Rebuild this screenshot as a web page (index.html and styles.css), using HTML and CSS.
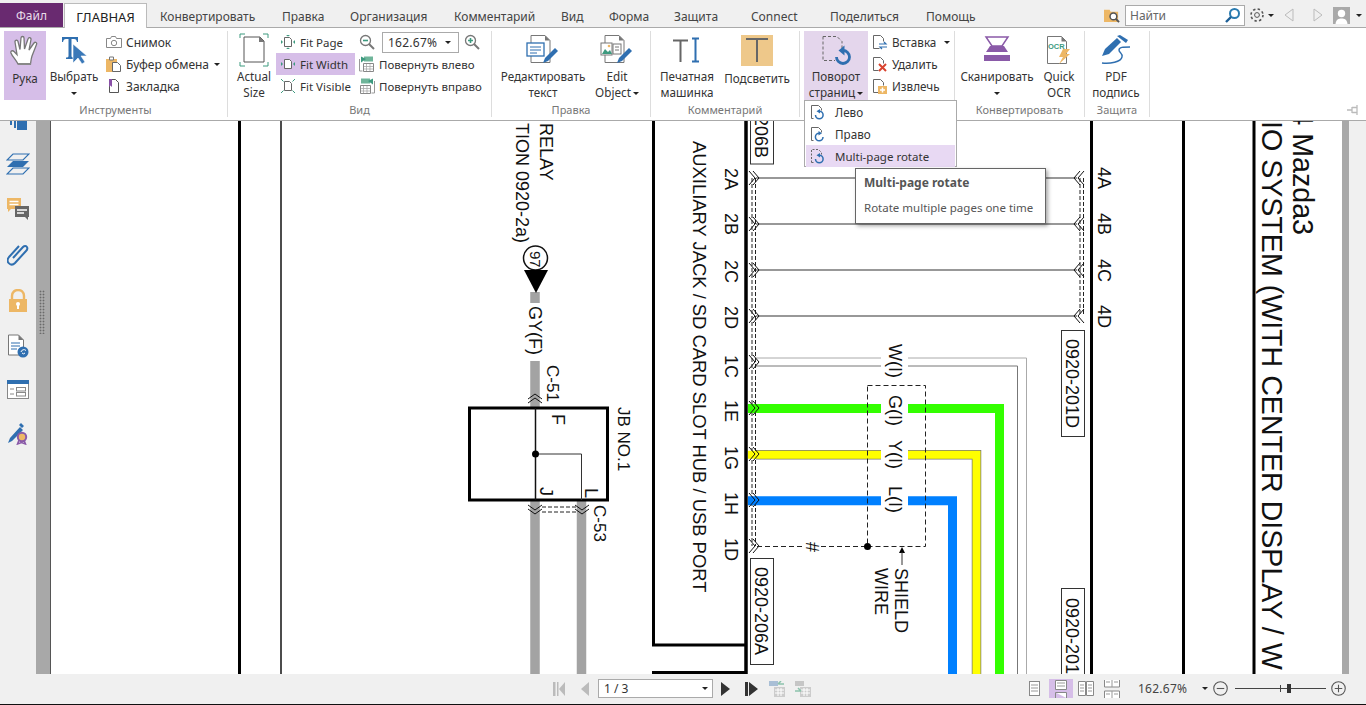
FILE: index.html
```html
<!DOCTYPE html>
<html lang="ru">
<head>
<meta charset="utf-8">
<title>PDF</title>
<link rel="stylesheet" href="styles.css">
</head>
<body>
<div class="app">
  <header class="tabs">
    <div class="tab-file">Файл</div>
    <div class="tab-main">ГЛАВНАЯ</div>
    <nav class="tab-list">
      <span>Конвертировать</span><span>Правка</span><span>Организация</span><span>Комментарий</span><span>Вид</span><span>Форма</span><span>Защита</span><span>Connect</span><span>Поделиться</span><span>Помощь</span>
    </nav>
    <div class="tab-tools">
      <svg class="ic16 folder" viewBox="0 0 17 17"><path d="M0 3h6l1 2h8v11H0z" fill="#edb765"/><circle cx="10" cy="10" r="3.6" fill="#fff" stroke="#555" stroke-width="1.6"/><path d="M12.5 12.5l3.5 3.5" stroke="#555" stroke-width="2"/></svg>
      <div class="search"><span>Найти</span><svg class="ic16" viewBox="0 0 16 16"><circle cx="9.5" cy="6.5" r="4.5" fill="#fff" stroke="#2a7bb0" stroke-width="2"/><path d="M6 10l-5 5" stroke="#1d5f96" stroke-width="2.4"/></svg></div>
      <svg class="ic16 gear" viewBox="0 0 16 16"><circle cx="8" cy="8" r="2.4" fill="none" stroke="#555"/><circle cx="8" cy="8" r="6" fill="none" stroke="#555" stroke-width="1.6" stroke-dasharray="2.4 2.3"/></svg>
      <i class="caret caret-gear"></i>
      <svg class="tri-nav" viewBox="0 0 10 14"><path d="M9 1L1 7l8 6z" fill="none" stroke="#bbb"/></svg>
      <svg class="tri-nav tri-next" viewBox="0 0 10 14"><path d="M1 1l8 6-8 6z" fill="none" stroke="#bbb"/></svg>
      <svg class="user" viewBox="0 0 17 17"><rect width="17" height="17" fill="#a9a9a9"/><circle cx="8.5" cy="6.5" r="3.7" fill="#fff"/><path d="M2.5 17c.5-4.500 3-5.500 6-5.500s5.500 1 6 5.500z" fill="#fff"/></svg>
      <i class="caret caret-user"></i>
    </div>
  </header>

  <section class="ribbon">
    <div class="group g1">
      <div class="body">
        <div class="big active w42">
          <div class="big-ic"><svg width="30" height="32" viewBox="0 0 30 32"><path d="M8 29c-2-4-6-8-7-11-.6-2 1.500-3 3-1.500l3 3L5 7c-.3-2 2.500-2.500 3-.5l2 8L11 3c.2-2 3-2 3 0l.5 11L18 4c.6-2 3.300-1.500 3 .5L19 15l5-7c1.200-1.500 3.300-.3 2.500 1.500L22 21c-1 3-1 5-1.500 8z" fill="#fff" stroke="#777" stroke-width="1.300"/><path d="M8 29h13" stroke="#888" stroke-width="2"/></svg></div>
          <div class="lbl">Рука</div>
        </div>
        <div class="big w56">
          <div class="big-ic"><svg width="30" height="30" viewBox="0 0 30 30"><path d="M3 2h16v5h-1c-.5-2-1-3-3-3h-2.500v17c0 1 1 1.500 2.500 1.500V24H7v-1.500c1.500 0 2.500-.5 2.500-1.500V4H7C5 4 4.500 5 4 7H3z" fill="#2f6fb0"/><path d="M14 9v19l5-5 4 6 3-2-4-6h6z" fill="#3a78b8" stroke="#fff" stroke-width=".6"/></svg></div>
          <div class="lbl">Выбрать</div>
          <div class="lbl"><i class="caret"></i></div>
        </div>
        <div class="col col-a">
          <div class="row"><svg class="ic16" viewBox="0 0 16 16"><path d="M.5 4.500h4l1-2h4l1 2h5v9H.5z" fill="none" stroke="#888"/><circle cx="8" cy="9" r="2.700" fill="none" stroke="#888"/></svg><span>Снимок</span></div>
          <div class="row"><svg class="ic16" viewBox="0 0 16 16"><path d="M0 3h11v13H0z" fill="#edb765"/><path d="M3.500 1h4v3h-4z" fill="#fff" stroke="#777"/><path d="M6.500 6.500h5l3 3v6h-8z" fill="#fff" stroke="#666"/></svg><span>Буфер обмена</span><i class="caret caret-row"></i></div>
          <div class="row"><svg class="ic16" viewBox="0 0 16 16"><path d="M3.500 1.500h6l3 3v10h-9z" fill="#fff" stroke="#555"/><path d="M3 1h3v8L4.500 7.500 3 9z" fill="#8a50a8"/></svg><span>Закладка</span></div>
        </div>
      </div>
      <div class="glabel">Инструменты</div>
    </div>

    <div class="group g2">
      <div class="body">
        <div class="big w36">
          <div class="big-ic"><svg width="30" height="34" viewBox="0 0 30 34"><path d="M5 4h16l4 4v21H5z" fill="#fff" stroke="#555"/><path d="M20 4h1l4 4v1h-5z" fill="#777"/><path d="M1 5V1h5M24 1h5v4M1 29v4h5M24 33h5v-4" fill="none" stroke="#3d9a7f"/></svg></div>
          <div class="lbl">Actual</div><div class="lbl">Size</div>
        </div>
        <div class="col col-fit">
          <div class="row"><svg class="ic16" viewBox="0 0 16 16"><path d="M4.500 3.500h5l2 2v7h-7z" fill="#fff" stroke="#666"/><path d="M8 2.500L6 1h4zM8 13.500L6 15h4zM3 8L1 6v4zM13 8l2-2v4z" fill="#3d9a7f"/></svg><span>Fit Page</span></div>
          <div class="row on"><svg class="ic16" viewBox="0 0 16 16"><path d="M4.500 3.500h5l2 2v7h-7z" fill="#fff" stroke="#666"/><path d="M3 8L1 6v4zM13 8l2-2v4z" fill="#3d9a7f"/></svg><span>Fit Width</span></div>
          <div class="row"><svg class="ic16" viewBox="0 0 16 16"><path d="M4.500 3.500h5l2 2v7h-7z" fill="#fff" stroke="#666"/><path d="M1 1l2.500 2.500M15 1l-2.500 2.500M1 15l2.500-2.500M15 15l-2.500-2.500" stroke="#3d9a7f"/></svg><span>Fit Visible</span></div>
        </div>
        <div class="col col-zoom">
          <div class="zoomrow">
            <svg class="ic16" viewBox="0 0 16 16"><circle cx="6.500" cy="6.500" r="5" fill="#fff" stroke="#777" stroke-width="1.300"/><path d="M4 6.500h5" stroke="#3d9a7f" stroke-width="1.600"/><path d="M10 10l5 5" stroke="#777" stroke-width="2"/></svg>
            <div class="zoombox"><span>162.67%</span><i class="caret"></i></div>
            <svg class="ic16" viewBox="0 0 16 16"><circle cx="6.500" cy="6.500" r="5" fill="#fff" stroke="#777" stroke-width="1.300"/><path d="M4 6.500h5M6.500 4v5" stroke="#3d9a7f" stroke-width="1.600"/><path d="M10 10l5 5" stroke="#777" stroke-width="2"/></svg>
          </div>
          <div class="row"><svg class="ic16" viewBox="0 0 16 16"><path d="M4.500 7.500h10v8h-10z" fill="#fff" stroke="#888"/><path d="M7.500 8v7M11 8v7M5 10.500h9M5 13h9" stroke="#aaa" stroke-width=".8"/><path d="M5 .5h9v5H5z" fill="#6fb59a"/><path d="M7 3L2 .5v6z" fill="#3d9a7f"/><path d="M.5 3v12h3" fill="none" stroke="#999"/></svg><span>Повернуть влево</span></div>
          <div class="row"><svg class="ic16" viewBox="0 0 16 16"><path d="M1.500 7.500h10v8h-10z" fill="#fff" stroke="#888"/><path d="M4.500 8v7M8 8v7M2 10.500h9M2 13h9" stroke="#aaa" stroke-width=".8"/><path d="M2 .5h9v5H2z" fill="#6fb59a"/><path d="M9 3l5-2.500v6z" fill="#3d9a7f"/><path d="M15.500 3v12h-3" fill="none" stroke="#999"/></svg><span>Повернуть вправо</span></div>
        </div>
      </div>
      <div class="glabel">Вид</div>
    </div>

    <div class="group g3">
      <div class="body">
        <div class="big w84">
          <div class="big-ic"><svg width="34" height="32" viewBox="0 0 34 32"><path d="M5 1.500h14l5 5v22H5z" fill="#fff" stroke="#777"/><path d="M19 1.500l5 5h-5z" fill="#777"/><rect x="1" y="9" width="17" height="13" fill="#fff" stroke="#2f6fb0" stroke-width="1.300"/><path d="M4 13h11M4 16h11M4 19h7" stroke="#2f6fb0"/><path d="M17 29l2-5L29 14l3 3-10 10z" fill="#2f6fb0"/></svg></div>
          <div class="lbl">Редактировать</div><div class="lbl">текст</div>
        </div>
        <div class="big w50 ml7">
          <div class="big-ic"><svg width="34" height="32" viewBox="0 0 34 32"><path d="M5 1.500h14l5 5v22H5z" fill="#fff" stroke="#777"/><path d="M19 1.500l5 5h-5z" fill="#777"/><rect x="1" y="9" width="11" height="12" fill="#fff" stroke="#777"/><path d="M2 20l3-5 3 3 2-2 2 4z" fill="#3d9a7f"/><circle cx="9" cy="12" r="1.300" fill="#edb765"/><rect x="13" y="10" width="8" height="10" fill="#fff" stroke="#777"/><path d="M15 13h4M15 16h4" stroke="#777"/><path d="M17 29l2-5L29 14l3 3-10 10z" fill="#2f6fb0"/></svg></div>
          <div class="lbl">Edit</div><div class="lbl">Object<i class="caret caret-in"></i></div>
        </div>
      </div>
      <div class="glabel">Правка</div>
    </div>

    <div class="group g4">
      <div class="body">
        <div class="big w54">
          <div class="big-ic"><svg width="30" height="26" viewBox="0 0 30 26"><path d="M1 3.500h15M8.500 3v22" stroke="#666" stroke-width="2" fill="none"/><path d="M20 1.500h7M20 24.500h7M23.500 1.500v23" stroke="#2f6fb0" stroke-width="2" fill="none"/></svg></div>
          <div class="lbl">Печатная</div><div class="lbl">машинка</div>
        </div>
        <div class="big w66 ml10">
          <div class="big-ic"><svg width="32" height="31" viewBox="0 0 32 31"><rect width="32" height="31" fill="#eec88a"/><path d="M5 4h22M16 4v23" stroke="#666" stroke-width="2" fill="none"/></svg></div>
          <div class="lbl">Подсветить</div>
        </div>
      </div>
      <div class="glabel">Комментарий</div>
    </div>

    <div class="group g5">
      <div class="body">
        <div class="big soft w64">
          <div class="big-ic"><svg width="32" height="32" viewBox="0 0 32 32"><path d="M3 2.500h14l5 5v8M3 2.500v24h12" fill="none" stroke="#666" stroke-dasharray="3 2"/><path d="M16.500 23a6.500 6.500 0 1 0 6.500-6.500" fill="none" stroke="#2f6fb0" stroke-width="2.800"/><path d="M24.500 11.500v10l-6-5z" fill="#2f6fb0"/></svg></div>
          <div class="lbl">Поворот</div><div class="lbl">страниц<i class="caret caret-in"></i></div>
        </div>
        <div class="col col-pg">
          <div class="row"><svg class="ic16" viewBox="0 0 16 16"><path d="M1.500 1.500h7l3 3v3M1.500 1.500v13h6" fill="none" stroke="#666"/><path d="M7 10h7l-2-2M15 13H8l2 2" fill="none" stroke="#2f6fb0" stroke-width="1.200"/></svg><span>Вставка</span><i class="caret caret-row2"></i></div>
          <div class="row"><svg class="ic16" viewBox="0 0 16 16"><path d="M1.500 1.500h7l3 3v3M1.500 1.500v13h5" fill="none" stroke="#666"/><path d="M7 8l7 7M14 8l-7 7" stroke="#d9432f" stroke-width="2"/></svg><span>Удалить</span></div>
          <div class="row"><svg class="ic16" viewBox="0 0 16 16"><path d="M1.500 1.500h7l3 3v3M1.500 1.500v13h5" fill="none" stroke="#666"/><rect x="6" y="8" width="9" height="8" fill="#edb765"/><path d="M10.500 9.500v5M8 12h5" stroke="#fff" stroke-width="1.500"/></svg><span>Извлечь</span></div>
        </div>
      </div>
      <div class="glabel">&nbsp;</div>
    </div>

    <div class="group g6">
      <div class="body">
        <div class="big w72">
          <div class="big-ic"><svg width="28" height="28" viewBox="0 0 28 28"><path d="M3 1h22l-6 9H9z" fill="none" stroke="#8a5aa8" stroke-width="1.500"/><path d="M7 10h14l4 6H3z" fill="#8a5aa8"/><rect x="2" y="17" width="24" height="3" fill="#fff"/><rect x="1" y="19" width="26" height="6" fill="#8a5aa8"/></svg></div>
          <div class="lbl">Сканировать</div>
          <div class="lbl"><i class="caret"></i></div>
        </div>
        <div class="big w40 ml6">
          <div class="big-ic"><svg width="26" height="30" viewBox="0 0 26 30"><path d="M1.500 1.500h14l5 5v22h-19z" fill="#fff" stroke="#777"/><path d="M15.500 1.500l5 5h-5z" fill="#777"/><text class="ocr" x="2" y="14">OCR</text><path d="M17 14h7l-4 5h4l-11 10 4-7h-4z" fill="#edb765"/></svg></div>
          <div class="lbl">Quick</div><div class="lbl">OCR</div>
        </div>
      </div>
      <div class="glabel">Конвертировать</div>
    </div>

    <div class="group g7">
      <div class="body">
        <div class="big w50">
          <div class="big-ic"><svg width="32" height="32" viewBox="0 0 32 32"><path d="M2 22l3-7L17 4l4 4L9 20z" fill="#2f6fb0"/><path d="M17 2l3-1 8 5-2 3z" fill="#2f6fb0"/><path d="M2 29c8 1 19-1 20-6 1-4-3-4-3-7s4-3 11-3" fill="none" stroke="#2f6fb0" stroke-width="1.400"/></svg></div>
          <div class="lbl">PDF</div><div class="lbl">подпись</div>
        </div>
      </div>
      <div class="glabel">Защита</div>
    </div>

    <svg class="pin" viewBox="0 0 12 10"><path d="M0 5h5M5 2.500h5M5 7.500h5M10 0v10M5 2v6" stroke="#bbb" stroke-width="1.300"/></svg>
  </section>

  <main class="main">
    <aside class="side">
      <svg class="side-top" width="18" height="9" viewBox="0 0 18 9"><path d="M1 0h2v4H1zM5 0h2v7H5z" fill="#2f6fb0"/><path d="M8 0h10v9H8z" fill="#2f6fb0"/></svg>
      <svg class="side-ic" width="24" height="22" viewBox="0 0 24 22"><path d="M7 1h16l-6 6H1zM7 15h16l-6 6H1z" fill="none" stroke="#2f6fb0" stroke-width="1.200"/><path d="M7 8h16l-6 6H1z" fill="#2f6fb0"/></svg>
      <svg class="side-ic" width="24" height="24" viewBox="0 0 24 24"><path d="M1 1h14v11H5l-3 3v-3H1z" fill="#edb765"/><path d="M3.500 4.500h9M3.500 7.500h9" stroke="#fff" stroke-width="1.300"/><path d="M9 9h14v11h-1v3l-3-3H9z" fill="#666"/><path d="M11 13h10M11 16h7" stroke="#fff" stroke-width="1.300"/></svg>
      <svg class="side-ic" width="22" height="24" viewBox="0 0 22 24"><path d="M6 16L16 5c3-3 6 1 3 4L8 21c-4 4-10-1-6-6L12 4" fill="none" stroke="#2f6fb0" stroke-width="2" transform="translate(0 -1)"/></svg>
      <svg class="side-ic" width="20" height="23" viewBox="0 0 20 23"><path d="M4 10V7c0-8 12-8 12 0v3" fill="none" stroke="#edb765" stroke-width="2.400"/><rect x="1" y="10" width="18" height="13" fill="#edb765"/><circle cx="10" cy="15" r="2" fill="#fff"/><rect x="9" y="15" width="2" height="5" fill="#fff"/></svg>
      <svg class="side-ic" width="22" height="24" viewBox="0 0 22 24"><path d="M1.500 1h10l5 5v15h-15z" fill="#fff" stroke="#777"/><path d="M11.500 1l5 5h-5z" fill="#777"/><path d="M4 9h9M4 12h9M4 15h6" stroke="#2f6fb0" stroke-width="1.200"/><circle cx="16" cy="18" r="5.500" fill="#2f6fb0"/><path d="M14 18a3 3 0 0 1 5-1.500M18 19a2 2 0 0 1-3 0" stroke="#fff" fill="none"/></svg>
      <svg class="side-ic" width="22" height="20" viewBox="0 0 22 20"><rect x=".5" y=".5" width="21" height="18" fill="#fff" stroke="#888"/><rect width="22" height="4" fill="#2f6fb0"/><path d="M3 9h4M3 14h4" stroke="#888"/><rect x="9.500" y="7.500" width="9" height="3.500" fill="none" stroke="#888"/><rect x="9.500" y="12.500" width="9" height="3.500" fill="none" stroke="#888"/></svg>
      <svg class="side-ic" width="22" height="23" viewBox="0 0 22 23"><path d="M1 21l2-5L13 5l3 3L5 19zM12 3l2-2 3 3-2 2z" fill="#2f6fb0"/><circle cx="15" cy="15" r="4.200" fill="#edb765" stroke="#8a5aa8" stroke-width="2"/><path d="M12 18l-1.500 4 4-1.500 4 1.500-1.500-4" fill="none" stroke="#8a5aa8" stroke-width="1.500"/></svg>
    </aside>
    <div class="gutter"><i class="grip"></i></div>
    <div class="page">
      <svg class="drawing" viewBox="51 121 1291 553" aria-label="wiring diagram">
        <defs>
          <g id="cr" fill="none" stroke="#111"><path d="M-5-7l6 7-6 7M-1-7l6 7-6 7"/></g>
          <g id="cl" fill="none" stroke="#111"><path d="M5-7l-6 7 6 7M1-7l-6 7 6 7"/></g>
          <g id="cu" fill="none" stroke="#111"><path d="M-7 5l7-5 7 5M-7 1l7-5 7 5"/></g>
          <g id="cd" fill="none" stroke="#111"><path d="M-7-5l7 5 7-5M-7-1l7 5 7-5"/></g>
        </defs>

        <path class="s3" d="M239.500 121V674"/>
        <path class="s2" d="M281 121V674"/>

        <path class="gray" d="M535 292V303M535 361V408M535 500V674M581.500 500V674"/>
        <circle class="ring" cx="535.500" cy="258" r="12"/>
        <path d="M524 270h24l-12 23z"/>
        <use href="#cu" x="535" y="398"/>
        <use href="#cd" x="535" y="510"/>
        <use href="#cd" x="582" y="510"/>
        <path class="dash-fine" d="M542 507H576M542 512H576"/>
        <rect class="box3" x="469.500" y="408" width="138" height="92"/>
        <path class="s2" d="M535.500 408V500"/>
        <path class="s1" d="M535 454H581.500V500"/>
        <circle cx="535.500" cy="454" r="3.500"/>

        <text class="t18" transform="translate(540 123) rotate(90)">RELAY</text>
        <text class="t18" transform="translate(515.500 123) rotate(90)">TION 0920-2a)</text>
        <text class="t15" transform="translate(530 251) rotate(90)">97</text>
        <text class="t18" transform="translate(529 306) rotate(90)">GY(F)</text>
        <text class="t17" transform="translate(547 365) rotate(90)">C-51</text>
        <text class="t18" transform="translate(551.500 414) rotate(90)">F</text>
        <text class="t18" transform="translate(540 487) rotate(90)">J</text>
        <text class="t18" transform="translate(585 488) rotate(90)">L</text>
        <text class="t17" transform="translate(618 407) rotate(90)">JB NO.1</text>
        <text class="t17" transform="translate(594 505) rotate(90)">C-53</text>

        <path class="s3" d="M653.500 121V645H747"/>
        <path class="s35" d="M746 121V674"/>
        <path class="s3" d="M653.500 674V672.500H746"/>
        <text class="t184" transform="translate(692.500 141) rotate(90)">AUXILIARY JACK / SD CARD SLOT HUB / USB PORT</text>
        <rect class="lab" x="750.500" y="100" width="23" height="64"/>
        <text class="t18" text-anchor="end" transform="translate(755 158) rotate(90)">0920-206B</text>
        <rect class="lab" x="750.500" y="558.500" width="23" height="106"/>
        <text class="t18" transform="translate(755 567) rotate(90)">0920-206A</text>
        <rect class="lab" x="1061.500" y="330.500" width="23" height="106"/>
        <text class="t18" transform="translate(1066 339) rotate(90)">0920-201D</text>
        <rect class="lab" x="1061.500" y="588.500" width="23" height="106"/>
        <text class="t18" transform="translate(1066 598) rotate(90)">0920-201</text>

        <text class="t18" transform="translate(725 168) rotate(90)">2A</text>
        <text class="t18" transform="translate(725 213) rotate(90)">2B</text>
        <text class="t18" transform="translate(725 260) rotate(90)">2C</text>
        <text class="t18" transform="translate(725 306) rotate(90)">2D</text>
        <text class="t18" transform="translate(725 355) rotate(90)">1C</text>
        <text class="t18" transform="translate(725 400) rotate(90)">1E</text>
        <text class="t18" transform="translate(725 446) rotate(90)">1G</text>
        <text class="t18" transform="translate(725 492) rotate(90)">1H</text>
        <text class="t18" transform="translate(725 538) rotate(90)">1D</text>

        <path class="w-thin" d="M756 178H1077M756 224H1077M756 270H1077M756 316H1077"/>
        <path class="dash-fine" d="M752 178V546M755.500 178V546M1080 178V316M1083.500 178V316"/>
        <path class="wlight" d="M756 358H881M908 358H1026.500V674"/>
        <path class="wdark" d="M756 366H881M908 366H1017.500V674"/>
        <path class="wb" d="M756 454.800H881M908 454.800H976.500V674"/>
        <path class="wy" d="M748 454.800H881M908 454.800H976.500V674"/>
        <path class="wg" d="M748 408.500H881M908 408.500H999.500V674"/>
        <path class="wl" d="M748 500.800H881M908 500.800H952.500V674"/>

        <use href="#cr" x="754" y="178"/><use href="#cr" x="754" y="224"/><use href="#cr" x="754" y="270"/><use href="#cr" x="754" y="316"/>
        <use href="#cr" x="754" y="362"/><use href="#cr" x="754" y="408"/><use href="#cr" x="754" y="454"/><use href="#cr" x="754" y="500"/><use href="#cr" x="754" y="546"/>
        <use href="#cl" x="1079" y="178"/><use href="#cl" x="1079" y="224"/><use href="#cl" x="1079" y="270"/><use href="#cl" x="1079" y="316"/>

        <rect class="dash" x="867.500" y="385.500" width="58" height="161"/>
        <path class="dash" d="M757 546.500H803M821 546.500H867"/>
        <circle cx="867.500" cy="546.500" r="3.500"/>
        <path d="M902 547l-3 6h6z"/>
        <path class="s1" d="M902 552V565"/>
        <text class="t18" text-anchor="middle" transform="translate(806 547) rotate(90)">#</text>

        <text class="t18" transform="translate(889 344) rotate(90)">W(I)</text>
        <text class="t18" transform="translate(889 395) rotate(90)">G(I)</text>
        <text class="t18" transform="translate(889 440) rotate(90)">Y(I)</text>
        <text class="t18" transform="translate(889 486) rotate(90)">L(I)</text>
        <text class="t18" transform="translate(895 568) rotate(90)">SHIELD</text>
        <text class="t18" transform="translate(875 568) rotate(90)">WIRE</text>

        <path class="s3" d="M1091.500 121V674"/>
        <path class="s3" d="M1183.500 121V674"/>
        <path class="s3" d="M1254 121V674"/>
        <text class="t18" transform="translate(1098 167) rotate(90)">4A</text>
        <text class="t18" transform="translate(1098 213) rotate(90)">4B</text>
        <text class="t18" transform="translate(1098 259) rotate(90)">4C</text>
        <text class="t18" transform="translate(1098 305) rotate(90)">4D</text>
        <text class="t28" transform="translate(1262 121) rotate(90)">IO SYSTEM (WITH CENTER DISPLAY / W</text>
        <text class="t28" text-anchor="end" transform="translate(1293 235) rotate(90)">4 Mazda3</text>
      </svg>
    </div>
    <div class="rgut"></div>
    <div class="rbar"></div>
  </main>

  <footer class="status">
    <div class="pager">
      <svg class="nav first" viewBox="0 0 13 14"><path d="M1 0h2.500v14H1zM5 0h1.500v14H5z" fill="#bbb"/><path d="M13 0L7 7l6 7z" fill="#bbb"/></svg>
      <svg class="nav prev" viewBox="0 0 8 14"><path d="M8 0L0 7l8 7z" fill="#bbb"/></svg>
      <div class="pagebox"><span>1 / 3</span><i class="caret"></i></div>
      <svg class="nav next" viewBox="0 0 9 14"><path d="M0 0l9 7-9 7z" fill="#333"/></svg>
      <svg class="nav last" viewBox="0 0 13 14"><path d="M0 0h3v14H0zM4 0l9 7-9 7z" fill="#333"/></svg>
      <svg class="nav copy1" viewBox="0 0 16 16"><path d="M0 0h9v5H0z" fill="#a9bfd6"/><path d="M5 6h11v10H5z" fill="#ccc"/><path d="M6 9h9M6 12h9M9 7v8M12 7v8" stroke="#fff"/><path d="M9 3h6M9 3l3-3" stroke="#8cc2ac" stroke-width="1.500"/></svg>
      <svg class="nav copy2" viewBox="0 0 16 16"><path d="M0 0h9v5H0z" fill="#c6c6c6"/><path d="M5 6h11v10H5z" fill="#ccc"/><path d="M6 9h9M6 12h9M9 7v8M12 7v8" stroke="#fff"/><path d="M0 10h6M6 10l-3-3" stroke="#8cc2ac" stroke-width="1.500"/></svg>
    </div>
    <div class="views">
      <svg class="vw v1" viewBox="0 0 11 15"><rect x=".5" y=".5" width="10" height="14" fill="#fff" stroke="#888"/><path d="M2 4h7M2 7h7M2 10h7" stroke="#999"/></svg>
      <div class="vw-on"><svg class="vw2" viewBox="0 0 12 18"><path d="M.5.500h11v9H.5zM.5 12.500h11V18M.5 18v-5.500" fill="#fff" stroke="#888"/><path d="M2 3h8M2 6h8" stroke="#999"/></svg></div>
      <svg class="vw v3" viewBox="0 0 16 15"><path d="M.5.500h7v14h-7zM8.500.500h7v14h-7z" fill="#fff" stroke="#888"/><path d="M2 4h4M2 7h4M2 10h4M10 4h4M10 7h4M10 10h4" stroke="#999"/></svg>
      <svg class="vw v4" viewBox="0 0 16 18"><path d="M.5 0v7h15V0M.5 18v-7h15v7" fill="#fff" stroke="#888"/><path d="M8 0v7M8 11v7M2 2h4M10 2h4M2 14h4M10 14h4" stroke="#999"/></svg>
      <span class="pct">162.67%</span><i class="caret caret-pct"></i>
      <svg class="circ c-minus" viewBox="0 0 14 14"><circle cx="7" cy="7" r="6.300" fill="none" stroke="#555"/><path d="M3.500 7h7" stroke="#555"/></svg>
      <div class="slider"><i class="tick"></i><i class="thumb"></i></div>
      <svg class="circ c-plus" viewBox="0 0 14 14"><circle cx="7" cy="7" r="6.300" fill="none" stroke="#555"/><path d="M3.500 7h7M7 3.500v7" stroke="#555"/></svg>
    </div>
  </footer>

  <div class="menu">
    <div class="mi"><svg class="ic16" viewBox="0 0 16 16"><path d="M1.500 14.500V1.500h7l3 3v2M1.500 14.500h2" fill="none" stroke="#666"/><path d="M5.500 11a3.800 3.800 0 1 0 3.800-3.800" fill="none" stroke="#2f6fb0" stroke-width="1.500"/><path d="M10 5v4.500L6.500 7.200z" fill="#2f6fb0"/></svg><span>Лево</span></div>
    <div class="mi"><svg class="ic16" viewBox="0 0 16 16"><path d="M1.500 14.500V1.500h7l3 3v2M1.500 14.500h2" fill="none" stroke="#666"/><path d="M13 11a3.800 3.800 0 1 1-3.800-3.800" fill="none" stroke="#2f6fb0" stroke-width="1.500"/><path d="M8.500 5v4.500L12 7.200z" fill="#2f6fb0"/></svg><span>Право</span></div>
    <div class="mi mi-on"><svg class="ic16" viewBox="0 0 16 16"><path d="M1.500 14.500V1.500h7l3 3v2M1.500 14.500h2" fill="none" stroke="#666" stroke-dasharray="2 1.500"/><path d="M5.500 11a3.800 3.800 0 1 0 3.800-3.800" fill="none" stroke="#2f6fb0" stroke-width="1.500"/><path d="M10 5v4.500L6.500 7.200z" fill="#2f6fb0"/></svg><span>Multi-page rotate</span></div>
  </div>
  <div class="tip">
    <div class="tip-t">Multi-page rotate</div>
    <div class="tip-d">Rotate multiple pages one time</div>
  </div>
</div>
</body>
</html>
```
FILE: styles.css
```css
* { box-sizing: border-box; }
html, body { margin: 0; height: 705px; overflow: hidden; }
body { font-family: "Noto Sans", "Liberation Sans", sans-serif; font-size: 12px; color: #333; background: #f0f0f0; }
svg { display: block; flex: none; }
.app { position: relative; display: flex; flex-direction: column; height: 705px; }

.tabs { display: flex; height: 28px; padding-top: 3px; background: #f0f0f0; border-bottom: 1px solid #aaa; flex: none; }
.tab-file { width: 63px; height: 24px; background: #692a70; color: #e8dcea; text-align: center; line-height: 26px; }
.tab-main { width: 83px; height: 25px; margin-left: 1px; background: #fff; border: 1px solid #bbb; border-bottom: 0; line-height: 26px; text-align: center; color: #222; font-size: 13px; position: relative; z-index: 1; }
.tab-list { display: grid; grid-template-columns: 122px 68px 104px 107px 48px 65px 77px 79px 96px 70px; padding-left: 13px; line-height: 27px; color: #444; }
.tab-tools { display: flex; align-items: center; height: 24px; margin-left: auto; }
.folder { margin-right: 5px; }
.search { display: flex; align-items: center; justify-content: space-between; width: 120px; height: 21px; padding: 0 3px 0 4px; background: #fff; border: 1px solid #aaa; color: #666; margin-right: 4px; }
.gear { margin-right: 3px; }
.caret { display: inline-block; width: 0; height: 0; border: 3px solid transparent; border-top: 3px solid #222; border-bottom: 0; vertical-align: middle; }
.caret-gear { margin-right: 10px; }
.tri-nav { width: 10px; height: 14px; }
.tri-next { margin-left: 19px; }
.user { width: 17px; height: 17px; margin-left: 10px; }
.caret-user { margin: 0 4px 0 6px; }

.ribbon { display: flex; height: 93px; padding: 3px 0 0 4px; background: #fff; border-bottom: 1px solid #aaa; flex: none; position: relative; }
.group { height: 86px; border-right: 1px solid #ddd; flex: none; }
.g1 { width: 224px; }
.g2 { width: 264px; padding-left: 8px; }
.g3 { width: 159px; padding-left: 9px; }
.g4 { width: 149px; padding-left: 9px; }
.g5 { width: 155px; padding-left: 4px; }
.g6 { width: 130px; padding-left: 6px; }
.g7 { width: 65px; padding-left: 6px; }
.body { display: flex; height: 69px; }
.glabel { height: 17px; padding-top: 3px; line-height: 14px; margin-left: -8px; text-align: center; color: #777; font-size: 11px; }
.g1 .glabel { margin-left: 0; }
.g3 .glabel, .g4 .glabel { margin-left: -9px; }
.g5 .glabel { margin-left: -4px; }
.g6 .glabel, .g7 .glabel { margin-left: -6px; }

.big { display: flex; flex-direction: column; align-items: center; flex: none; height: 69px; }
.big-ic { height: 39px; display: flex; align-items: center; justify-content: center; }
.lbl { height: 16px; line-height: 16px; white-space: nowrap; font-size: 11.7px; }
.active { background: #d6bee8; }
.soft { background: #e4d6ec; }
.w36 { width: 36px; } .w40 { width: 40px; } .w42 { width: 42px; } .w50 { width: 50px; } .w54 { width: 54px; }
.w56 { width: 56px; } .w64 { width: 64px; } .w66 { width: 66px; } .w72 { width: 72px; } .w84 { width: 84px; }
.ml6 { margin-left: 6px; } .ml7 { margin-left: 7px; } .ml10 { margin-left: 10px; }
.caret-in { margin-left: 2px; }

.col { display: flex; flex-direction: column; flex: none; }
.col-a { margin-left: 4px; }
.col-fit { margin-left: 4px; width: 79px; font-size: 11.5px; }
.col-zoom { padding-left: 4px; font-size: 11.5px; }
.col-pg { margin-left: 4px; font-size: 11.7px; }
.row { display: flex; align-items: center; height: 22px; white-space: nowrap; }
.col-fit .row { padding-left: 4px; }
.on { background: #d6bee8; }
.ic16 { width: 16px; height: 16px; }
.row .ic16 { margin-right: 4px; }
.caret-row { margin-left: 5px; }
.caret-row2 { margin-left: 8px; }
.zoomrow { display: flex; align-items: center; height: 22px; }
.zoombox { display: flex; align-items: center; justify-content: space-between; width: 77px; height: 21px; margin: 0 5px 0 7px; padding: 0 7px 0 5px; border: 1px solid #aaa; background: #fff; font-size: 12px; letter-spacing: .25px; }
.ocr { font: 700 7.5px "Liberation Sans", sans-serif; fill: #3d9a7f; }
.pin { position: absolute; right: 7px; bottom: 5px; width: 12px; height: 10px; }

.main { display: flex; height: 553px; flex: none; }
.side { width: 36px; background: #f0f0f0; display: flex; flex-direction: column; align-items: center; flex: none; }
.side-top { margin-bottom: 23px; }
.side-ic { margin-bottom: 22px; }
.gutter { width: 15px; background: #a8a8a8; border-right: 1px solid #555; display: flex; align-items: center; flex: none; padding-left: 3px; }
.grip { display: block; width: 6px; height: 44px; margin-top: -172px; background: radial-gradient(circle, #6a6a6a .8px, transparent 1.1px) 0 0 / 3px 3px; }
.page { width: 1291px; height: 553px; background: #fff; flex: none; overflow: hidden; }
.rgut { width: 7px; background: #a8a8a8; flex: none; }
.rbar { width: 17px; background: #f0f0f0; flex: none; }

.drawing { width: 1291px; height: 553px; }
.drawing text { font-family: "Liberation Sans", Arial, sans-serif; fill: #111; }
.t15 { font-size: 15px; }
.t17 { font-size: 17px; }
.t18 { font-size: 18px; }
.t184 { font-size: 18.4px; }
.t28 { font-size: 28.6px; }
.s1, .s2, .s3, .s35, .box3, .w-thin, .wb, .wlight, .wdark, .wg, .wy, .wl, .gray, .dash, .dash-fine, .ring { fill: none; }
.s1 { stroke: #333; stroke-width: 1; }
.s2 { stroke: #111; stroke-width: 1.500; }
.s3 { stroke: #000; stroke-width: 3; }
.s35 { stroke: #000; stroke-width: 3.500; }
.box3 { stroke: #000; stroke-width: 3; }
.gray { stroke: #a3a3a3; stroke-width: 9.500; }
.ring { stroke: #111; stroke-width: 1.500; }
.lab { stroke: #333; fill: #fff; stroke-width: 1; }
.w-thin { stroke: #333; stroke-width: 1.200; }
.wlight { stroke: #aaa; stroke-width: 1; }
.wdark { stroke: #777; stroke-width: 1; }
.wb { stroke: #777; stroke-width: 9.500; }
.wg { stroke: #33ff00; stroke-width: 9; }
.wy { stroke: #ffff00; stroke-width: 8; }
.wl { stroke: #0080ff; stroke-width: 9; }
.dash { stroke: #222; stroke-width: 1; stroke-dasharray: 5 3; }
.dash-fine { stroke: #222; stroke-width: 1; stroke-dasharray: 4 2; }

.status { display: flex; align-items: center; height: 31px; padding-bottom: 1px; background: #f0f0f0; border-bottom: 1px solid #111; flex: none; }
.pager { display: flex; align-items: center; margin-left: 552px; }
.nav { height: 14px; }
.first { width: 13px; }
.prev { width: 8px; margin-left: 16px; }
.pagebox { display: flex; align-items: center; justify-content: space-between; width: 115px; height: 19px; margin: 0 8px 0 9px; padding: 0 4px 0 5px; background: #fff; border: 1px solid #aaa; }
.next { width: 9px; }
.last { width: 13px; margin-left: 15px; }
.copy1 { width: 16px; height: 16px; margin-left: 11px; }
.copy2 { width: 16px; height: 16px; margin-left: 10px; }
.views { display: flex; align-items: center; margin-left: 218px; }
.v1 { width: 11px; height: 15px; }
.vw-on { width: 24px; height: 19px; margin: 0 5px 0 9px; background: #d6bee8; display: flex; justify-content: center; padding-top: 1px; overflow: hidden; }
.vw2 { width: 12px; height: 18px; }
.v3 { width: 16px; height: 15px; }
.v4 { width: 16px; height: 18px; margin-left: 10px; }
.pct { margin-left: 18px; width: 64px; color: #444; letter-spacing: .25px; }
.caret-pct { margin-left: 0; }
.circ { width: 15px; height: 15px; }
.c-minus { margin-left: 5px; }
.slider { position: relative; width: 91px; height: 1px; margin: 0 5px 0 7px; background: #444; }
.tick { position: absolute; left: 45px; top: -3px; width: 1px; height: 7px; background: #444; }
.thumb { position: absolute; left: 52px; top: -4px; width: 4px; height: 9px; background: #333; }

.menu { position: absolute; left: 804px; top: 100px; width: 153px; height: 67px; padding: 0 1px; background: #fff; border: 1px solid #aaa; z-index: 2; }
.mi { display: flex; align-items: center; height: 22px; padding-left: 4px; white-space: nowrap; font-size: 11.7px; }
.mi .ic16 { margin-right: 9px; }
.mi-on { background: #e8d9f3; font-size: 11.5px; }
.tip { position: absolute; left: 855px; top: 168px; width: 191px; height: 56px; padding: 6px 8px; background: #fff; border: 1px solid #666; box-shadow: 2px 2px 4px rgba(0,0,0,.35); z-index: 2; color: #555; white-space: nowrap; font-size: 11.5px; }
.tip-t { font-weight: 700; line-height: 16px; margin-bottom: 9px; font-size: 12px; }
.tip-d { line-height: 16px; }
```
